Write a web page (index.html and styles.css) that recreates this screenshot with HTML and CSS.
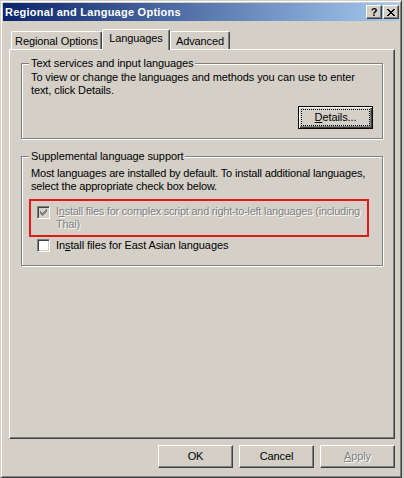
FILE: index.html
```html
<!DOCTYPE html>
<html>
<head>
<meta charset="utf-8">
<title>Regional and Language Options</title>
<link rel="stylesheet" href="styles.css">
</head>
<body>
<div class="window">
  <div class="titlebar">
    <span class="title">Regional and Language Options</span>
    <div class="tb-buttons">
      <span class="tb-btn help">?</span>
      <span class="tb-btn close"><svg width="8" height="7" viewBox="0 0 8 7" shape-rendering="crispEdges"><path d="M0 0h2v1h-2z M6 0h2v1h-2z M1 1h2v1h-2z M5 1h2v1h-2z M2 2h4v1h-4z M3 3h2v1h-2z M2 4h4v1h-4z M1 5h2v1h-2z M5 5h2v1h-2z M0 6h2v1h-2z M6 6h2v1h-2z" fill="#000"/></svg></span>
    </div>
  </div>
  <div class="main">
    <div class="tabs">
      <div class="tab t1">Regional Options</div>
      <div class="tab t2 active">Languages</div>
      <div class="tab t3">Advanced</div>
    </div>
    <div class="panel">
      <div class="group g1">
        <div class="legend">Text services and input languages</div>
        <p class="text t-g1">To view or change the languages and methods you can use to enter<br>text, click Details.</p>
        <div class="btn-row">
          <button class="btn default"><span class="focus"><u>D</u>etails...</span></button>
        </div>
      </div>
      <div class="group g2">
        <div class="legend">Supplemental language support</div>
        <p class="text t-g2">Most languages are installed by default. To install additional languages,<br>select the appropriate check box below.</p>
        <div class="highlight">
          <div class="check-row disabled">
            <span class="checkbox disabled-box"><svg width="7" height="7" viewBox="0 0 7 7" shape-rendering="crispEdges"><path d="M6 0h1v1h-1z M5 1h2v1h-2z M0 2h1v1h-1z M4 2h3v1h-3z M0 3h2v1h-2z M3 3h3v1h-3z M0 4h5v1h-5z M1 5h3v1h-3z M2 6h1v1h-1z" fill="#808080"/></svg></span>
            <span class="label">I<u>n</u>stall files for complex script and right-to-left languages (including<br>Thai)</span>
          </div>
        </div>
        <div class="check-row plain">
          <span class="checkbox"></span>
          <span class="label">In<u>s</u>tall files for East Asian languages</span>
        </div>
      </div>
    </div>
    <div class="actions">
      <button class="btn">OK</button>
      <button class="btn">Cancel</button>
      <button class="btn" disabled><span class="dis"><u>A</u>pply</span></button>
    </div>
  </div>
</div>
</body>
</html>
```
FILE: styles.css
```css
* { box-sizing: border-box; }
html, body { margin: 0; padding: 0; }
body {
  background: #d4d0c8;
  font-family: "Liberation Sans", Arial, sans-serif;
  font-size: 11px;
  letter-spacing: -0.1px;
  color: #000;
  width: 404px;
  height: 478px;
  overflow: hidden;
}
.window {
  width: 402px;
  height: 478px;
  border: 1px solid;
  border-color: #d4d0c8 #404040 #404040 #d4d0c8;
  box-shadow: inset 1px 1px #fff, inset -1px -1px #808080;
  padding: 2px;
  display: flex;
  flex-direction: column;
  background: #d4d0c8;
}
.titlebar {
  height: 18px;
  flex: none;
  background: linear-gradient(to right, #0a246a, #a6caf0);
  display: flex;
  align-items: center;
  padding-left: 2px;
  color: #fff;
  font-weight: bold;
}
.title { flex: 1; line-height: 13px; white-space: nowrap; letter-spacing: 0.25px; }
.tb-buttons { display: flex; gap: 1px; }
.tb-btn {
  width: 16px;
  height: 14px;
  background: #d4d0c8;
  border: 1px solid;
  border-color: #fff #404040 #404040 #fff;
  box-shadow: inset -1px -1px #808080;
  display: flex;
  align-items: center;
  justify-content: center;
  color: #000;
  font-size: 11px;
  line-height: 11px;
  letter-spacing: 0;
}
.main {
  flex: 1;
  padding: 8px 4px 0 6px;
  display: flex;
  flex-direction: column;
}
.tabs {
  display: flex;
  align-items: flex-end;
  height: 20px;
  padding-left: 2px;
}
.tab {
  height: 18px;
  border: 1px solid;
  border-bottom: none;
  border-color: #fff #404040 #404040 #fff;
  box-shadow: inset -1px 0 #808080;
  border-radius: 2px 2px 0 0;
  text-align: center;
  padding-top: 3px;
  line-height: 13px;
  white-space: nowrap;
  background: #d4d0c8;
}
.t1 { width: 91px; }
.t2 { width: 68px; }
.t3 { width: 60px; }
.tab.active {
  height: 21px;
  margin-bottom: -1px;
  position: relative;
  z-index: 1;
  padding-top: 2px;
}
.panel {
  height: 390px;
  flex: none;
  border: 1px solid;
  border-color: #fff #404040 #404040 #fff;
  box-shadow: inset -1px -1px #808080;
  padding: 13px 11px 0;
}
.group {
  border: 1px solid #808080;
  box-shadow: inset 1px 1px #fff, 1px 1px #fff;
  padding: 0 9px 9px 9px;
}
.g2 { margin-top: 17px; padding-bottom: 13px; }
.legend {
  width: max-content;
  margin: -7px 0 0 -2px;
  padding: 0 2px;
  background: #d4d0c8;
  line-height: 13px;
}
.text { margin: 1px 0 0; line-height: 13px; white-space: nowrap; }
.t-g2 { margin-top: 4px; letter-spacing: -0.17px; }
.btn-row { display: flex; justify-content: flex-end; margin-top: 9px; }
.btn {
  width: 75px;
  height: 23px;
  border: 1px solid;
  border-color: #fff #404040 #404040 #fff;
  box-shadow: inset -1px -1px #808080;
  background: #d4d0c8;
  font-family: inherit;
  font-size: 11px;
  letter-spacing: -0.1px;
  color: #000;
  padding: 0;
  margin: 0;
  display: flex;
  align-items: center;
  justify-content: center;
  line-height: 13px;
}
.btn.default {
  border-color: #000;
  box-shadow: inset 1px 1px #fff, inset -1px -1px #404040, inset -2px -2px #808080;
  padding: 2px;
}
.focus {
  flex: 1;
  align-self: stretch;
  border: 1px dotted #000;
  display: flex;
  align-items: center;
  justify-content: center;
}
.highlight {
  margin: 6px 0 0 -2px;
  width: 340px;
  border: 2px solid #e01818;
  padding: 4px 4px 4px 6px;
}
.check-row {
  display: flex;
  align-items: flex-start;
  gap: 6px;
  line-height: 13px;
  white-space: nowrap;
}
.check-row.disabled .label { letter-spacing: -0.25px; }
.check-row.plain { margin: 2px 0 0 6px; }
.checkbox {
  flex: none;
  width: 13px;
  height: 13px;
  border: 1px solid;
  border-color: #808080 #fff #fff #808080;
  box-shadow: inset 1px 1px #404040, inset -1px -1px #d4d0c8;
  background: #fff;
  display: flex;
  align-items: center;
  justify-content: center;
}
.check-row.disabled .checkbox { margin-top: 1px; }
.disabled-box { background: #d4d0c8; }
.check-row.disabled .label,
.dis {
  color: #808080;
  text-shadow: 1px 1px 0 #fff;
}
.actions {
  display: flex;
  justify-content: flex-end;
  gap: 6px;
  margin-top: 6px;
}
```
